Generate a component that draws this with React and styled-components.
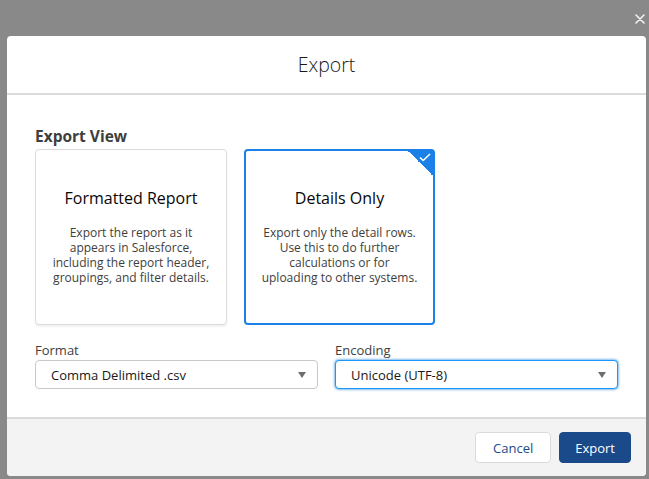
import React from "react";
import styled, { createGlobalStyle } from "styled-components";

const Global = createGlobalStyle`
  html, body { margin: 0; padding: 0; }
  body {
    font-family: "Open Sans", "Liberation Sans", sans-serif;
    background: #898989;
    width: 649px;
    height: 479px;
    overflow: hidden;
  }
  * { box-sizing: border-box; }
`;

const Backdrop = styled.div`
  width: 649px;
  height: 479px;
  background: #898989;
  display: flex;
  flex-direction: column;
  padding: 0 3px 0 7px;
`;

const CloseRow = styled.div`
  height: 36px;
  display: flex;
  justify-content: flex-end;
  align-items: flex-start;
  padding: 13px 0 0 0;
`;

const CloseButton = styled.button`
  width: 12px;
  height: 12px;
  padding: 0;
  border: none;
  background: transparent;
  display: flex;
  align-items: center;
  justify-content: center;
  cursor: pointer;
`;

const Modal = styled.div`
  width: 639px;
  background: #fff;
  border-radius: 4px;
  display: flex;
  flex-direction: column;
  overflow: hidden;
`;

const Header = styled.div`
  height: 59px;
  border-bottom: 2px solid #dddbda;
  display: flex;
  align-items: center;
  justify-content: center;
`;

const Title = styled.h2`
  margin: 0;
  font-size: 19.5px;
  font-weight: 300;
  color: #181818;
  line-height: 24px;
`;

const Body = styled.div`
  height: 322px;
  padding: 31px 28px 28px;
  display: flex;
  flex-direction: column;
`;

const SectionTitle = styled.h3`
  margin: 0 0 3px;
  font-size: 15.5px;
  font-weight: 700;
  line-height: 20px;
  color: #3e3e3c;
`;

const CardGrid = styled.div`
  display: grid;
  grid-template-columns: 192px 191px;
  gap: 17px;
`;

const Card = styled.div`
  position: relative;
  height: 176px;
  border: ${(p) => (p.$selected ? "2px solid #1b80e8" : "1px solid #dddbda")};
  border-radius: 4px;
  box-shadow: ${(p) => (p.$selected ? "none" : "0 2px 2px rgba(0,0,0,0.06)")};
  background: #fff;
  display: flex;
  flex-direction: column;
  align-items: center;
  justify-content: center;
  text-align: center;
  padding: 0 10px;
`;

const Corner = styled.div`
  position: absolute;
  top: -1px;
  right: -1px;
  width: 27px;
  height: 27px;
  background: linear-gradient(to bottom left, #1b80e8 50%, transparent 50%);
  border-top-right-radius: 3px;
`;

const Check = styled.svg`
  position: absolute;
  top: 3px;
  right: 3px;
`;

const CardTitle = styled.div`
  font-size: 16px;
  line-height: 22px;
  color: #080707;
  margin-bottom: 16px;
`;

const CardText = styled.div`
  font-size: 12px;
  line-height: 15px;
  color: #3e3e3c;
  margin-bottom: 2px;
`;

const FieldRow = styled.div`
  display: grid;
  grid-template-columns: 283px 283px;
  gap: 17px;
  margin-top: 16px;
`;

const Field = styled.div`
  display: flex;
  flex-direction: column;
`;

const Label = styled.label`
  font-size: 13px;
  line-height: 18px;
  color: #3e3e3c;
  margin-bottom: 1px;
`;

const Select = styled.div`
  height: 29px;
  border: 1px solid ${(p) => (p.$focus ? "#1b96ff" : "#c9c9c9")};
  box-shadow: ${(p) => (p.$focus ? "0 0 3px #0176d3" : "none")};
  border-radius: 4px;
  background: #fff;
  display: flex;
  align-items: center;
  justify-content: space-between;
  padding: 0 10px 0 15px;
  font-size: 13px;
  color: #181818;
`;

const Arrow = styled.span`
  width: 0;
  height: 0;
  border-left: 4.5px solid transparent;
  border-right: 4.5px solid transparent;
  border-top: 6px solid #706e6b;
  margin-right: 1px;
`;

const Footer = styled.div`
  height: 59px;
  border-top: 2px solid #dddbda;
  background: #f3f3f3;
  display: flex;
  align-items: center;
  justify-content: flex-end;
  gap: 8px;
  padding: 0 15px;
`;

const Button = styled.button`
  height: 31px;
  padding: 0 ${(p) => (p.$brand ? "15px" : "17px")};
  border-radius: 4px;
  border: 1px solid ${(p) => (p.$brand ? "#1b4a8a" : "#dddbda")};
  background: ${(p) => (p.$brand ? "#1b4a8a" : "#fff")};
  color: ${(p) => (p.$brand ? "#fff" : "#1b4a8a")};
  font-family: inherit;
  font-size: 13px;
  cursor: pointer;
`;

export default function App() {
  return (
    <>
      <Global />
      <Backdrop>
        <CloseRow>
          <CloseButton aria-label="Close">
            <svg width="10" height="10" viewBox="0 0 10 10">
              <path d="M1 1L9 9M9 1L1 9" stroke="#f4f4f4" strokeWidth="1.6" strokeLinecap="round" />
            </svg>
          </CloseButton>
        </CloseRow>
        <Modal>
          <Header>
            <Title>Export</Title>
          </Header>
          <Body>
            <SectionTitle>Export View</SectionTitle>
            <CardGrid>
              <Card>
                <CardTitle>Formatted Report</CardTitle>
                <CardText>
                  Export the report as it
                  <br />
                  appears in Salesforce,
                  <br />
                  including the report header,
                  <br />
                  groupings, and filter details.
                </CardText>
              </Card>
              <Card $selected>
                <Corner>
                  <Check width="12" height="9" viewBox="0 0 12 9">
                    <path d="M1 4.5L4.2 7.5L11 1" fill="none" stroke="#fff" strokeWidth="1.6" />
                  </Check>
                </Corner>
                <CardTitle>Details Only</CardTitle>
                <CardText>
                  Export only the detail rows.
                  <br />
                  Use this to do further
                  <br />
                  calculations or for
                  <br />
                  uploading to other systems.
                </CardText>
              </Card>
            </CardGrid>
            <FieldRow>
              <Field>
                <Label>Format</Label>
                <Select>
                  <span>Comma Delimited .csv</span>
                  <Arrow />
                </Select>
              </Field>
              <Field>
                <Label>Encoding</Label>
                <Select $focus>
                  <span>Unicode (UTF-8)</span>
                  <Arrow />
                </Select>
              </Field>
            </FieldRow>
          </Body>
          <Footer>
            <Button>Cancel</Button>
            <Button $brand>Export</Button>
          </Footer>
        </Modal>
      </Backdrop>
    </>
  );
}
